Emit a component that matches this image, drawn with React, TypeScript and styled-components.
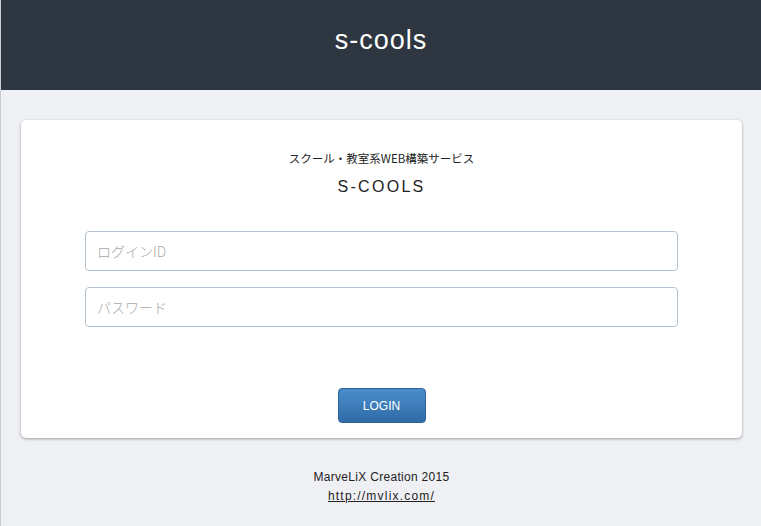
import React from "react";
import { styled, createGlobalStyle } from "styled-components";

const GlobalStyle = createGlobalStyle`
  html, body {
    margin: 0;
    padding: 0;
    background: #eff0f4;
    font-family: "Liberation Sans", "Noto Sans CJK JP", sans-serif;
    color: #222;
  }
  body {
    border-left: 1px solid #c9ccd3;
    min-height: 526px;
    box-sizing: border-box;
  }
`;

const Header = styled.header`
  height: 90px;
  background: #2d3641;
  display: flex;
  align-items: center;
  justify-content: center;
`;

const SiteTitle = styled.h1`
  margin: 0 0 10px;
  color: #fff;
  font-size: 27px;
  font-weight: 400;
  letter-spacing: 1px;
`;

const Main = styled.main`
  padding: 30px 19px 0 20px;
`;

const Card = styled.section`
  background: #fff;
  border-radius: 5px;
  box-shadow: 0 1px 3px rgba(0, 0, 0, 0.35);
  padding: 30px 64px 15px;
  display: flex;
  flex-direction: column;
  align-items: stretch;
`;

const Lead = styled.p`
  margin: 0;
  text-align: center;
  font-size: 11.5px;
  line-height: 16px;
  font-family: "Noto Sans CJK JP", sans-serif;
`;

const Brand = styled.h2`
  margin: 11px 0 0;
  text-align: center;
  font-size: 16px;
  line-height: 20px;
  font-weight: 400;
  letter-spacing: 2.3px;
`;

const Form = styled.form`
  margin-top: 34px;
  display: flex;
  flex-direction: column;
  gap: 16px;
`;

const Input = styled.input`
  height: 40px;
  box-sizing: border-box;
  border: 1px solid #b4c3cf;
  border-radius: 4px;
  padding: 0 11px;
  font-size: 14px;
  font-family: "Noto Sans CJK JP", sans-serif;
  font-weight: 300;
  color: #333;
  background: #fff;
  outline: none;
  &::placeholder {
    color: #a8a8a8;
  }
`;

const ButtonRow = styled.div`
  margin-top: 61px;
  display: flex;
  justify-content: center;
`;

const LoginButton = styled.button`
  width: 88px;
  height: 35px;
  border: 1px solid #2c6299;
  border-radius: 4px;
  background: linear-gradient(#4a8dcb, #2f6ca8);
  color: #fff;
  font-size: 12px;
  font-family: "Liberation Sans", sans-serif;
  cursor: pointer;
`;

const Footer = styled.footer`
  margin-top: 30px;
  text-align: center;
  font-size: 12px;
  line-height: 19px;
  color: #222;
  letter-spacing: 0.3px;
`;

const FooterLink = styled.a`
  color: #222;
  text-decoration: underline;
  letter-spacing: 1.2px;
`;

export default function App() {
  return (
    <>
      <GlobalStyle />
      <Header>
        <SiteTitle>s-cools</SiteTitle>
      </Header>
      <Main>
        <Card>
          <Lead>スクール・教室系WEB構築サービス</Lead>
          <Brand>S-COOLS</Brand>
          <Form onSubmit={(e) => e.preventDefault()}>
            <Input type="text" placeholder="ログインID" />
            <Input type="password" placeholder="パスワード" />
          </Form>
          <ButtonRow>
            <LoginButton type="button">LOGIN</LoginButton>
          </ButtonRow>
        </Card>
        <Footer>
          <div>MarveLiX Creation 2015</div>
          <FooterLink href="#">http://mvlix.com/</FooterLink>
        </Footer>
      </Main>
    </>
  );
}
